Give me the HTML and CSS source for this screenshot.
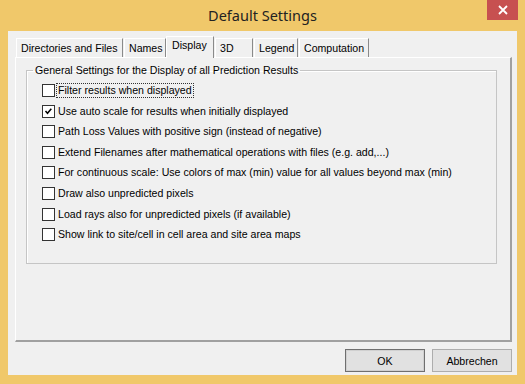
FILE: index.html
```html
<!DOCTYPE html>
<html lang="en">
<head>
  <meta charset="UTF-8">
  <title>Default Settings</title>
  <link rel="stylesheet" href="styles.css">
</head>
<body>
  <div class="window">
    <div class="titlebar">
      <span></span>
      <span class="title">Default Settings</span>
      <button class="close" title="Close">
        <svg width="10" height="10" viewBox="0 0 10 10"><path d="M1 1 L9 9 M9 1 L1 9" stroke="#fff" stroke-width="1.8"/></svg>
      </button>
    </div>

    <div class="client">
      <div class="tabs">
        <div class="tab tab-dirs">Directories and Files</div>
        <div class="tab tab-names">Names</div>
        <div class="tab tab-display active">Display</div>
        <div class="tab tab-3d">3D</div>
        <div class="tab tab-legend">Legend</div>
        <div class="tab tab-comp">Computation</div>
      </div>

      <div class="panel">
        <fieldset class="group">
          <legend>General Settings for the Display of all Prediction Results</legend>
          <ul class="options">
            <li><span class="box"></span><span class="text focus">Filter results when displayed</span></li>
            <li><span class="box"><svg width="11" height="11" viewBox="0 0 11 11"><path d="M2.5 5 L4.5 7.3 L8.3 2.8" fill="none" stroke="#000" stroke-width="1.5"/></svg></span><span class="text">Use auto scale for results when initially displayed</span></li>
            <li><span class="box"></span><span class="text">Path Loss Values with positive sign (instead of negative)</span></li>
            <li><span class="box"></span><span class="text">Extend Filenames after mathematical operations with files (e.g. add,...)</span></li>
            <li><span class="box"></span><span class="text">For continuous scale: Use colors of max (min) value for all values beyond max (min)</span></li>
            <li><span class="box"></span><span class="text">Draw also unpredicted pixels</span></li>
            <li><span class="box"></span><span class="text">Load rays also for unpredicted pixels (if available)</span></li>
            <li><span class="box"></span><span class="text">Show link to site/cell in cell area and site area maps</span></li>
          </ul>
        </fieldset>
      </div>

      <div class="buttons">
        <button class="btn btn-default">OK</button>
        <button class="btn">Abbrechen</button>
      </div>
    </div>
  </div>
</body>
</html>
```

FILE: styles.css
```css
body {
  margin: 0;
  font-family: 'Liberation Sans', Arial, sans-serif;
  font-size: 10.6px;
  color: #000;
}

.window {
  width: 525px;
  height: 384px;
  background: #f0c86a;
  box-sizing: border-box;
  padding: 0 8px 9px 8px;
  display: flex;
  flex-direction: column;
}

.titlebar {
  height: 31px;
  display: grid;
  grid-template-columns: 1fr auto 1fr;
  align-items: start;
}

.title {
  font-family: 'Noto Sans', sans-serif;
  font-size: 14.5px;
  line-height: 30px;
  color: #222;
}

.close {
  justify-self: end;
  margin-right: -1px;
  width: 31px;
  height: 20px;
  border: none;
  padding: 0;
  background: #c75050;
  display: flex;
  align-items: center;
  justify-content: center;
}

.client {
  flex: 1;
  background: #f0f0f0;
  padding: 5px 5px 0 7px;
  display: flex;
  flex-direction: column;
}

/* tab strip */
.tabs {
  display: flex;
  height: 21px;
  margin-left: 1px;
  align-items: flex-end;
}

.tab {
  height: 19px;
  box-sizing: border-box;
  line-height: 18px;
  padding-left: 4px;
  border-left: 1px solid #fff;
  border-top: 1px solid #fff;
  border-right: 1px solid #8a8a8a;
  margin-right: 1px;
  white-space: nowrap;
}

.tab-dirs { width: 107px; }
.tab-names { width: 42px; }
.tab-3d { width: 38px; }
.tab-legend { width: 44px; }
.tab-comp { width: 70px; }

.tab.active {
  width: 48px;
  height: 22px;
  margin-bottom: -1px;
  line-height: 17px;
  padding-left: 5px;
  background: #f0f0f0;
  position: relative;
  z-index: 1;
  margin-left: -1px;
}

.panel {
  height: 285px;
  box-sizing: border-box;
  border-left: 1px solid #fff;
  border-top: 1px solid #fff;
  border-right: 2px solid #a0a0a0;
  border-bottom: 2px solid #a0a0a0;
  padding: 6px 13px 0 10px;
}

.group {
  margin: 0;
  padding: 0 0 14px 15px;
  border: 1px solid #c5c5c5;
  box-shadow: inset 1px 1px 0 #fff;
}

.group legend {
  margin-left: -9px;
  padding: 0 2px;
  line-height: 13px;
}

.options {
  list-style: none;
  margin: 0;
  padding: 7px 0 0 0;
}

.options li {
  height: 20.6px;
  display: flex;
  align-items: flex-start;
}

.box {
  width: 13px;
  height: 13px;
  box-sizing: border-box;
  border: 1px solid #333;
  background: #fff;
  display: flex;
  align-items: center;
  justify-content: center;
  flex: none;
}

.text {
  margin-left: 2px;
  padding: 0 1px;
  line-height: 13px;
  white-space: nowrap;
}

.text.focus {
  outline: 1px dotted #333;
  outline-offset: 0;
}

.buttons {
  display: flex;
  justify-content: flex-end;
  gap: 7px;
  margin-top: 7px;
}

.btn {
  width: 80px;
  height: 23px;
  font-family: 'Liberation Sans', Arial, sans-serif;
  font-size: 10.6px;
  color: #000;
  background: #e1e1e1;
  border: 1px solid #adadad;
  padding: 0;
}

.btn-default {
  border-color: #6f6f6f;
  box-shadow: inset 0 0 0 1px #d0d0d0;
}
```
